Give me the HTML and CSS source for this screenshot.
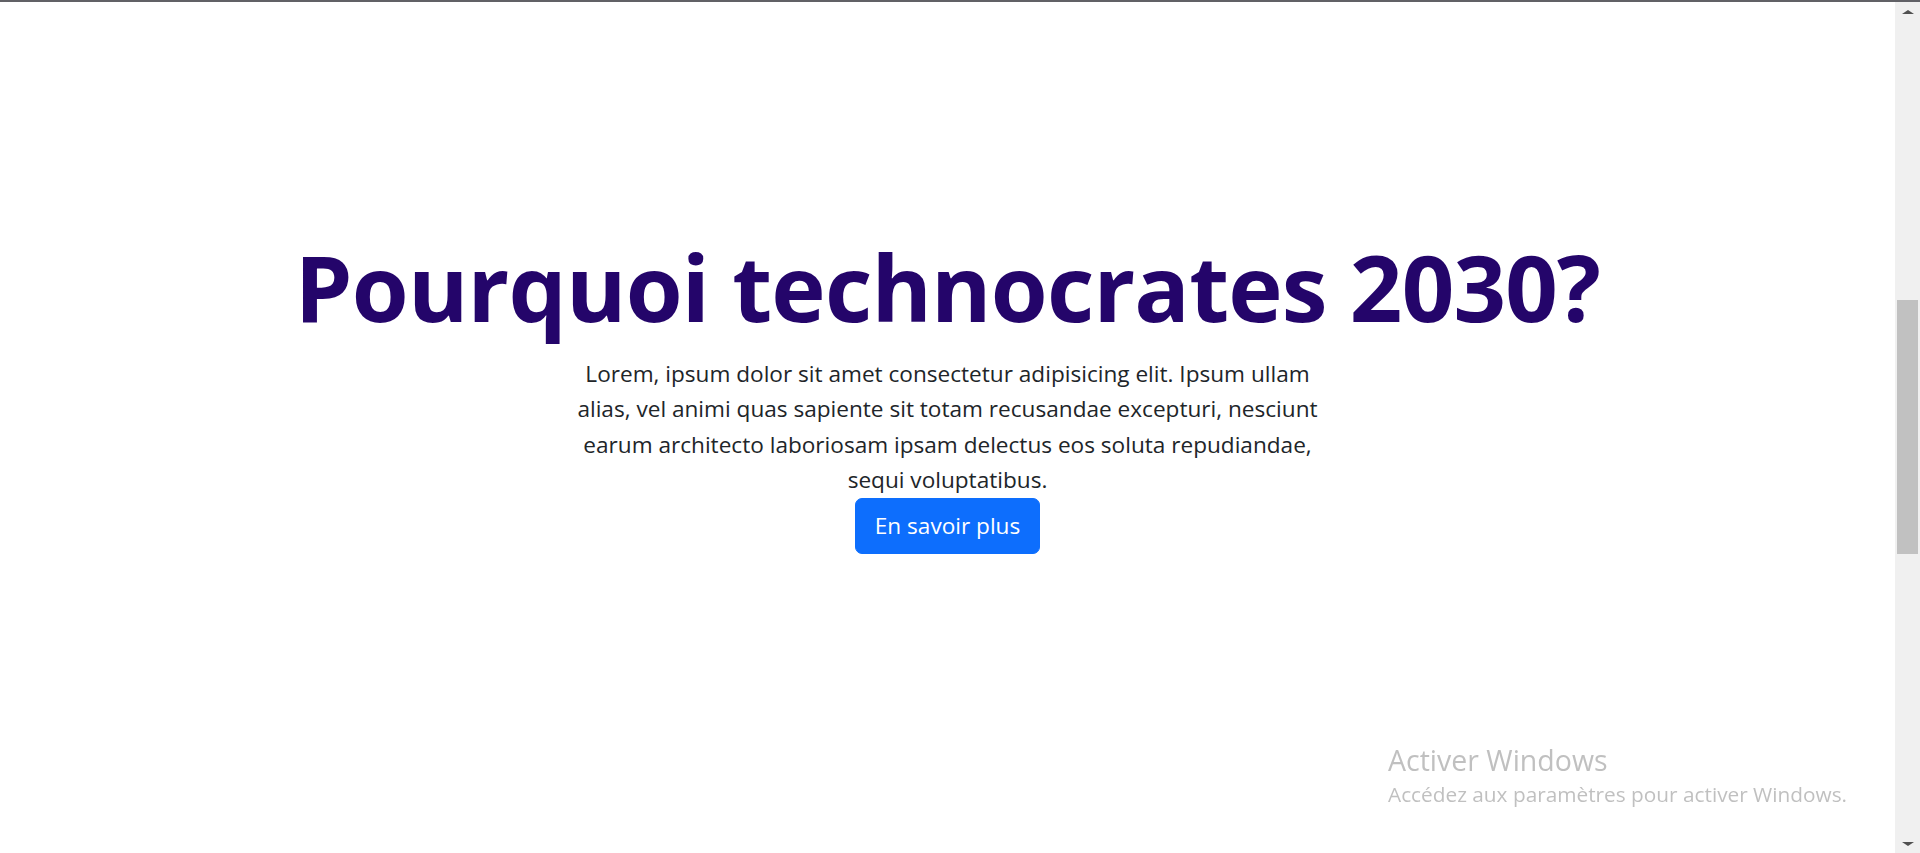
FILE: index.html
```html
<!DOCTYPE html>
<html lang="fr">
<head>
<meta charset="utf-8">
<title>Pourquoi technocrates 2030?</title>
<link rel="stylesheet" href="styles.css">
</head>
<body>
  <div class="topline"></div>
  <div class="frame">
    <main class="page">
      <section class="hero">
        <h1 class="hero-title">Pourquoi technocrates 2030?</h1>
        <p class="hero-lead">Lorem, ipsum dolor sit amet consectetur adipisicing elit. Ipsum ullam<br>alias, vel animi quas sapiente sit totam recusandae excepturi, nesciunt<br>earum architecto laboriosam ipsam delectus eos soluta repudiandae,<br>sequi voluptatibus.</p>
        <a class="btn-primary" href="#">En savoir plus</a>
      </section>
    </main>
    <div class="scrollbar">
      <div class="arrow arrow-up"></div>
      <div class="track">
        <div class="thumb"></div>
      </div>
      <div class="arrow arrow-down"></div>
    </div>
  </div>
  <div class="watermark">
    <div class="wm-title">Activer Windows</div>
    <div class="wm-sub">Accédez aux paramètres pour activer Windows.</div>
  </div>
</body>
</html>
```
FILE: styles.css
```css
* { box-sizing: border-box; }
html, body { margin: 0; padding: 0; height: 100%; overflow: hidden; }
body {
  background: #fff;
  font-family: "Open Sans", "Noto Sans", sans-serif;
  color: #212529;
  display: flex;
  flex-direction: column;
}
.topline { height: 2px; background: #616166; flex: none; }
.frame { flex: 1; display: flex; min-height: 0; }
.page { flex: 1; min-width: 0; }
.hero {
  display: flex;
  flex-direction: column;
  align-items: center;
  text-align: center;
  padding-top: 229px;
}
.hero-title {
  margin: 0 0 13px;
  font-size: 92px;
  line-height: 112px;
  letter-spacing: -0.8px;
  font-weight: 700;
  color: #24056a;
  white-space: nowrap;
}
.hero-lead {
  margin: 0 0 1px;
  font-size: 22.6px;
  line-height: 35.25px;
  font-weight: 400;
}
.btn-primary {
  display: inline-block;
  background: #0d6efd;
  border: 1px solid #0d6efd;
  color: #fff;
  text-decoration: none;
  font-size: 22.6px;
  line-height: 35.25px;
  padding: 9.4px 18.8px;
  border-radius: 7px;
}
.scrollbar {
  width: 25px;
  flex: none;
  background: #f0f0f0;
  display: flex;
  flex-direction: column;
  align-items: center;
}
.arrow { height: 19px; flex: none; display: flex; align-items: center; justify-content: center; width: 100%; }
.arrow-up::before {
  content: "";
  border-left: 6px solid transparent;
  border-right: 6px solid transparent;
  border-bottom: 4px solid #505050;
}
.arrow-down::before {
  content: "";
  border-left: 6px solid transparent;
  border-right: 6px solid transparent;
  border-top: 4px solid #505050;
}
.track { flex: 1; width: 100%; padding: 279px 2px 0; }
.thumb { height: 254px; background: #c1c1c1; }
.watermark {
  position: fixed;
  left: 1388px;
  top: 744px;
  color: rgba(150, 150, 150, 0.6);
  font-family: "Open Sans", "Noto Sans", sans-serif;
}
.wm-title { font-size: 28.5px; line-height: 32px; }
.wm-sub { font-size: 20.8px; line-height: 28px; margin-top: 4px; }
```
